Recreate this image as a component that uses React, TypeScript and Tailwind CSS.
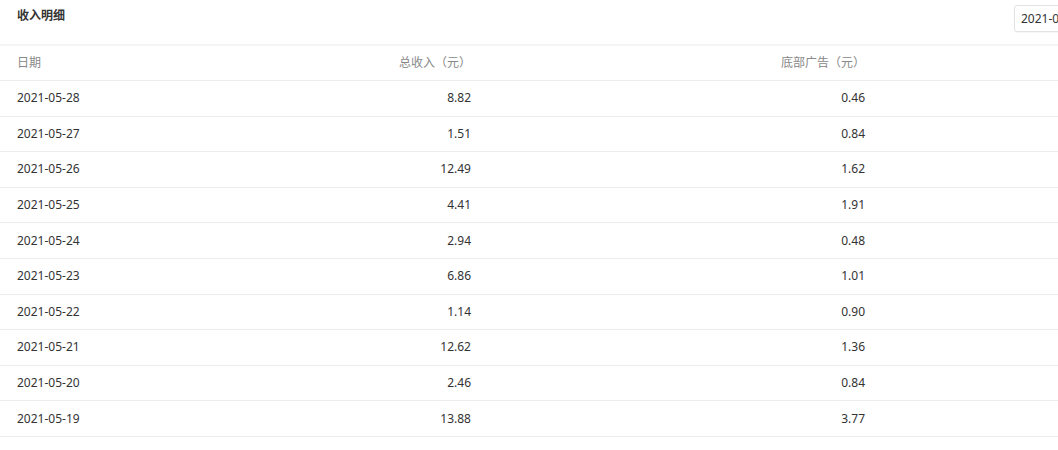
import React from "react";

const rows = [
  ["2021-05-28", "8.82", "0.46"],
  ["2021-05-27", "1.51", "0.84"],
  ["2021-05-26", "12.49", "1.62"],
  ["2021-05-25", "4.41", "1.91"],
  ["2021-05-24", "2.94", "0.48"],
  ["2021-05-23", "6.86", "1.01"],
  ["2021-05-22", "1.14", "0.90"],
  ["2021-05-21", "12.62", "1.36"],
  ["2021-05-20", "2.46", "0.84"],
  ["2021-05-19", "13.88", "3.77"],
];

const font = "font-['Noto_Sans','Noto_Sans_CJK_SC',sans-serif]";

export default function App() {
  return (
    <div className={`h-[450px] w-[1058px] overflow-hidden bg-white text-[12px] ${font}`}>
      <div className="flex h-[46px] items-start justify-between border-b-2 border-[#f5f5f5]">
        <div className="pl-[17px] pt-[7px] text-[12px] font-bold text-[#333]">收入明细</div>
        <div className="mr-[-60px] mt-[5px] flex h-[27px] w-[104px] shrink-0 items-center rounded-[3px] border border-[#e3e3e3] pl-[6px] text-[12px] text-[#333] shadow-[0_1px_1px_rgba(0,0,0,0.04)]">
          2021-05
        </div>
      </div>
      <div className="flex h-[35px] items-center border-b border-[#ececec] text-[#888]">
        <div className="w-[300px] pl-[17px]">日期</div>
        <div className="w-[171px] text-right">总收入（元）</div>
        <div className="w-[394px] text-right">底部广告（元）</div>
      </div>
      {rows.map((r) => (
        <div
          key={r[0]}
          className="flex h-[35.6px] items-center border-b border-[#ececec] text-[#333]"
        >
          <div className="w-[300px] pl-[17px]">{r[0]}</div>
          <div className="w-[171px] text-right">{r[1]}</div>
          <div className="w-[394px] text-right">{r[2]}</div>
        </div>
      ))}
    </div>
  );
}
